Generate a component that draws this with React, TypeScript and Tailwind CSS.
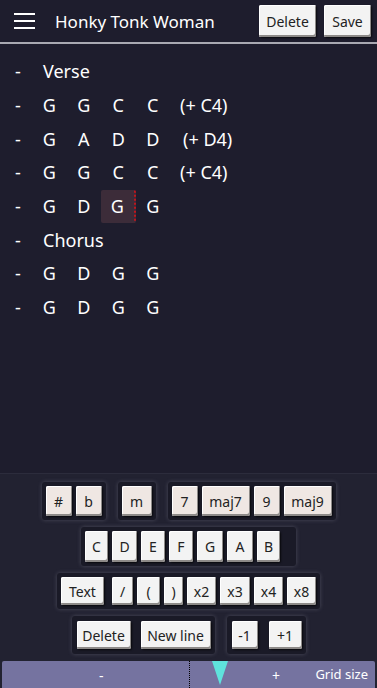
import React from "react";

type Row = { label?: string; chords?: string[]; note?: string; noteOffset?: string };

const ROWS: Row[] = [
  { label: "Verse" },
  { chords: ["G", "G", "C", "C"], note: "(+ C4)", noteOffset: "pl-[10px]" },
  { chords: ["G", "A", "D", "D"], note: "(+ D4)", noteOffset: "pl-[13px]" },
  { chords: ["G", "G", "C", "C"], note: "(+ C4)", noteOffset: "pl-[10px]" },
  { chords: ["G", "D", "G", "G"] },
  { label: "Chorus" },
  { chords: ["G", "D", "G", "G"] },
  { chords: ["G", "D", "G", "G"] },
];

const btn =
  "flex items-center justify-center rounded-[2px] text-[14px] text-[#222] shadow-[inset_-1px_-2px_0_#8d8a88,inset_1px_1px_0_#ffffff,1px_1px_2px_rgba(0,0,0,0.7)]";

function Key({ label, w, h = "h-[30px]", tint = false }: { label: string; w: string; h?: string; tint?: boolean }) {
  return (
    <div className={`${btn} ${w} ${h} ${tint ? "bg-[#efe7e3]" : "bg-[#f3f3f3]"}`}>{label}</div>
  );
}

function Group({ children, className = "" }: { children: React.ReactNode; className?: string }) {
  return (
    <div
      className={`flex items-center rounded-[3px] bg-[#1a1a27] p-[4px] shadow-[0_0_4px_rgba(200,200,220,0.25)] ${className}`}
    >
      {children}
    </div>
  );
}

export default function App() {
  return (
    <div
      className="flex h-[688px] w-[377px] flex-col overflow-hidden bg-[#1e1d2d] text-white"
      style={{ fontFamily: "'Noto Sans', 'Open Sans', sans-serif" }}
    >
      {/* Header */}
      <div className="flex h-[44px] shrink-0 items-center border-b-2 border-[#a9a9b2] pl-[14px] pr-[6px]">
        <div className="flex w-[21px] flex-col gap-[5px]">
          <div className="h-[2px] bg-white" />
          <div className="h-[2px] bg-white" />
          <div className="h-[2px] bg-white" />
        </div>
        <div className="ml-[20px] text-[17px] leading-none">Honky Tonk Woman</div>
        <div className="ml-auto flex gap-[8px]">
          <div className={`${btn} h-[32px] w-[57px] bg-[#f3f3f3]`}>Delete</div>
          <div className={`${btn} h-[32px] w-[47px] bg-[#f3f3f3]`}>Save</div>
        </div>
      </div>

      {/* Song lines */}
      <div className="flex-1 pt-[11px] text-[18px]">
        {ROWS.map((r, i) => (
          <div key={i} className="flex h-[33.7px] items-center">
            <div className="w-[32px] pl-[15px]">-</div>
            {r.label ? (
              <div className="pl-[11px]">{r.label}</div>
            ) : (
              <>
                {r.chords!.map((c, j) => (
                  <div
                    key={j}
                    className={`flex h-[33px] w-[34.5px] items-center justify-center ${
                      i === 4 && j === 2
                        ? "rounded-[2px] border-r-2 border-dotted border-r-[#c0141c] bg-[#3c2c39]"
                        : ""
                    }`}
                  >
                    {c}
                  </div>
                ))}
                {r.note && <div className={r.noteOffset}>{r.note}</div>}
              </>
            )}
          </div>
        ))}
      </div>

      {/* Keyboard */}
      <div className="flex shrink-0 flex-col items-center gap-[7px] border-t border-[#2c2c3c] bg-[#222231] pt-[8px]">
        <div className="flex gap-[12px]">
          <Group className="gap-[4px]">
            <Key label="#" w="w-[26px]" tint />
            <Key label="b" w="w-[26px]" tint />
          </Group>
          <Group>
            <Key label="m" w="w-[30px]" tint />
          </Group>
          <Group className="gap-[4px]">
            <Key label="7" w="w-[26px]" tint />
            <Key label="maj7" w="w-[48px]" tint />
            <Key label="9" w="w-[26px]" tint />
            <Key label="maj9" w="w-[48px]" tint />
          </Group>
        </div>
        <Group className="gap-[4px] pr-[16px]">
          <Key label="C" w="w-[23px]" h="h-[31px]" />
          <Key label="D" w="w-[25px]" h="h-[31px]" />
          <Key label="E" w="w-[24px]" h="h-[31px]" />
          <Key label="F" w="w-[24px]" h="h-[31px]" />
          <Key label="G" w="w-[26px]" h="h-[31px]" />
          <Key label="A" w="w-[26px]" h="h-[31px]" />
          <Key label="B" w="w-[23px]" h="h-[31px]" />
        </Group>
        <Group className="gap-[4px]">
          <div className="mr-[4px]">
            <Key label="Text" w="w-[43px]" h="h-[28px]" />
          </div>
          <Key label="/" w="w-[21px]" h="h-[28px]" />
          <Key label="(" w="w-[23px]" h="h-[28px]" />
          <Key label=")" w="w-[19px]" h="h-[28px]" />
          <Key label="x2" w="w-[29px]" h="h-[28px]" />
          <Key label="x3" w="w-[30px]" h="h-[28px]" />
          <Key label="x4" w="w-[29px]" h="h-[28px]" />
          <Key label="x8" w="w-[29px]" h="h-[28px]" />
        </Group>
        <div className="flex gap-[12px]">
          <Group className="gap-[10px] py-[5px] pl-[5px]">
            <Key label="Delete" w="w-[54px]" h="h-[28px]" />
            <Key label="New line" w="w-[70px]" h="h-[28px]" />
          </Group>
          <Group className="gap-[11px] py-[5px] pl-[5px]">
            <Key label="-1" w="w-[26px]" h="h-[28px]" />
            <Key label="+1" w="w-[33px]" h="h-[28px]" />
          </Group>
        </div>

        {/* Grid size bar */}
        <div className="relative flex h-[27px] w-[373px] items-center rounded-t-[2px] bg-[#7573a0] text-[14px]">
          <div className="absolute left-[97px] top-[4px]">-</div>
          <div className="absolute left-[187px] top-0 h-full border-l border-dotted border-black" />
          <svg className="absolute left-[210px] top-0" width="16" height="24" viewBox="0 0 16 24">
            <polygon points="0,0 16,0 8,24" fill="#5fe3dc" />
          </svg>
          <div className="absolute left-[270px] top-[4px]">+</div>
          <div className="ml-auto pr-[7px] text-[13px]">Grid size</div>
        </div>
      </div>
    </div>
  );
}
